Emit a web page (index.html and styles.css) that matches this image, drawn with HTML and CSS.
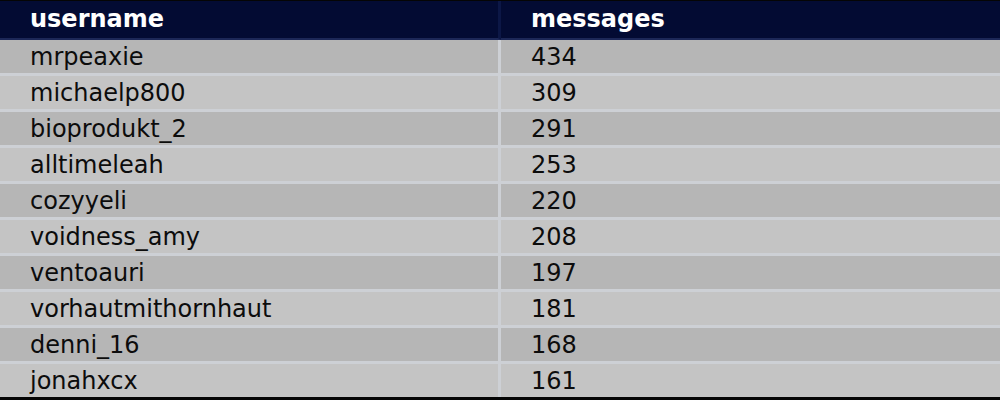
FILE: index.html
```html
<!DOCTYPE html>
<html>
<head>
<meta charset="utf-8">
<link rel="stylesheet" href="styles.css">
</head>
<body>
<table class="board">
  <thead>
    <tr><th class="col-user">username</th><th class="col-msg">messages</th></tr>
  </thead>
  <tbody>
    <tr><td class="col-user">mrpeaxie</td><td class="col-msg">434</td></tr>
    <tr><td class="col-user">michaelp800</td><td class="col-msg">309</td></tr>
    <tr><td class="col-user">bioprodukt_2</td><td class="col-msg">291</td></tr>
    <tr><td class="col-user">alltimeleah</td><td class="col-msg">253</td></tr>
    <tr><td class="col-user">cozyyeli</td><td class="col-msg">220</td></tr>
    <tr><td class="col-user">voidness_amy</td><td class="col-msg">208</td></tr>
    <tr><td class="col-user">ventoauri</td><td class="col-msg">197</td></tr>
    <tr><td class="col-user">vorhautmithornhaut</td><td class="col-msg">181</td></tr>
    <tr><td class="col-user">denni_16</td><td class="col-msg">168</td></tr>
    <tr><td class="col-user">jonahxcx</td><td class="col-msg">161</td></tr>
  </tbody>
</table>
</body>
</html>
```

FILE: styles.css
```css
html, body {
  margin: 0;
  padding: 0;
  background: #050505;
  height: 400px;
  overflow: hidden;
}

.board {
  width: 1000px;
  margin-top: 1px;
  border-collapse: separate;
  border-spacing: 0;
  table-layout: fixed;
  font-family: "DejaVu Sans", sans-serif;
  font-size: 24px;
}

.board th,
.board td {
  text-align: left;
  padding: 0 0 0 30px;
  white-space: nowrap;
  line-height: 1;
}

.board th {
  height: 35px;
  padding-bottom: 2px;
  background: #030b33;
  color: #ffffff;
  font-weight: bold;
  border-bottom: 2px solid #1c2757;
}

.board th.col-user {
  width: 468px;
  border-right: 3px solid #0c1746;
}

.board td {
  height: 33px;
  color: #0c0c0c;
  border-bottom: 3px solid #cdd0d5;
}

.board td.col-user {
  border-right: 3px solid #cdd0d5;
}

.board tbody tr:nth-child(odd) td {
  background: #b6b6b6;
}

.board tbody tr:nth-child(even) td {
  background: #c4c4c4;
}

.board tbody tr:last-child td {
  border-bottom: none;
}
```
